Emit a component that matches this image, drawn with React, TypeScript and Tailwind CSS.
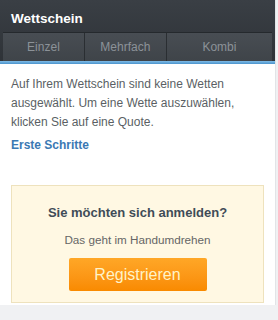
import React from 'react';

const tabs = ['Einzel', 'Mehrfach', 'Kombi'];

export default function App() {
  return (
    <div className="w-[278px] h-[320px] bg-[#f0f1f3] flex flex-col" style={{ fontFamily: '"Liberation Sans", Arial, sans-serif' }}>
      <div className="bg-white border-r border-[#e2e4e7] mr-[2px]">
        {/* Header */}
        <div className="bg-gradient-to-b from-[#3a3f45] to-[#2e3237] pt-[6px]">
          <div className="h-[26px] px-[11px] flex items-center text-white font-bold text-[13.5px]">Wettschein</div>
          <div className="flex mx-[3px] border-t border-[#25292d]">
            {tabs.map((t, i) => (
              <div
                key={t}
                className={`h-[28px] flex items-center justify-center bg-gradient-to-b from-[#484d53] to-[#3f4449] text-[#8c9298] text-[12px] ${i === 2 ? 'flex-[1.3]' : 'flex-1'} ${i > 0 ? 'border-l border-[#2a2e32]' : ''}`}
              >
                {t}
              </div>
            ))}
          </div>
          <div className="h-[3px] bg-gradient-to-b from-[#7fbbe6] to-[#4a93cc]" />
        </div>

        {/* Message */}
        <div className="pl-[11px] pr-[30px] pt-[11px] text-[12px] leading-[19px] text-[#5a5f64]">
          <p>Auf Ihrem Wettschein sind keine Wetten ausgewählt. Um eine Wette auszuwählen, klicken Sie auf eine Quote.</p>
          <p className="font-bold text-[#3b79b3] text-[12px] mt-[4px]">Erste Schritte</p>
        </div>

        {/* Register box */}
        <div className="px-[11px] pt-[30px] pb-[2px]">
          <div className="bg-[#fff8e3] border border-[#eee2bd] flex flex-col items-center pt-[17px] pb-[11px]">
            <div className="font-bold text-[13px] text-[#3f4c57]">Sie möchten sich anmelden?</div>
            <div className="text-[11.7px] text-[#666] mt-[8px]">Das geht im Handumdrehen</div>
            <div className="mt-[10px] w-[138px] h-[33px] bg-gradient-to-b from-[#ffa726] to-[#f98a00] rounded-[2px] flex items-center justify-center text-[#fff3c8] text-[16px]">
              Registrieren
            </div>
          </div>
        </div>
      </div>
    </div>
  );
}
